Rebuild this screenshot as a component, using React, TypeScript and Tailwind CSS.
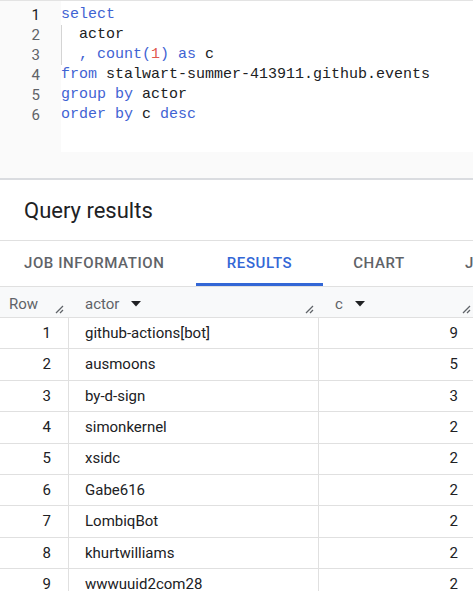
import React from 'react';

const KW = 'text-[#3f63d3]';

type Row = { actor: string; c: number };

const rows: Row[] = [
  { actor: 'github-actions[bot]', c: 9 },
  { actor: 'ausmoons', c: 5 },
  { actor: 'by-d-sign', c: 3 },
  { actor: 'simonkernel', c: 2 },
  { actor: 'xsidc', c: 2 },
  { actor: 'Gabe616', c: 2 },
  { actor: 'LombiqBot', c: 2 },
  { actor: 'khurtwilliams', c: 2 },
  { actor: 'wwwuuid2com28', c: 2 },
];

const SortArrow = () => (
  <svg width="10" height="6" viewBox="0 0 10 6" className="ml-[12px]">
    <path d="M0 0 L10 0 L5 5.5 Z" fill="#202124" />
  </svg>
);

const Resize = () => (
  <svg width="9" height="9" viewBox="0 0 9 9" className="self-end mb-[3px]">
    <path d="M1 8 L8 1 M5 8 L8 5" stroke="#5f6368" strokeWidth="1.3" />
  </svg>
);

const CodeLine = ({ children, guide }: { children: React.ReactNode; guide?: boolean }) => (
  <div className={`h-[20px] whitespace-pre ${guide ? 'shadow-[inset_1px_0_0_#d4d4d4]' : ''}`}>{children}</div>
);

export default function App() {
  return (
    <div className="w-[473px] h-[591px] overflow-hidden bg-white font-['Roboto',sans-serif] text-[#202124]">
      {/* editor */}
      <div className="h-[180px] bg-[#fafafa] border-t border-[#e3e3e3] border-b-2 border-b-[#dadce0] flex flex-col">
        <div className="flex h-[151px]">
          <div className="w-[61px] pt-[4px] pr-[21px] flex flex-col items-end text-[15px] leading-[20px] text-[#5f6368]">
            {[1, 2, 3, 4, 5, 6].map((n) => (
              <div key={n} className={n === 1 ? 'text-[#202124]' : ''}>
                {n}
              </div>
            ))}
          </div>
          <div className="flex-1 bg-white pt-[4px] font-['Liberation_Mono',monospace] text-[15px] leading-[20px] text-[#202124]">
            <CodeLine>
              <span className={KW}>select</span>
            </CodeLine>
            <CodeLine guide>{'  actor'}</CodeLine>
            <CodeLine guide>
              {'  '}
              <span className={KW}>, count(</span>
              <span className="text-[#e2584e]">1</span>
              <span className={KW}>) as</span> c
            </CodeLine>
            <CodeLine>
              <span className={KW}>from</span> stalwart-summer-413911.github.events
            </CodeLine>
            <CodeLine>
              <span className={KW}>group by</span> actor
            </CodeLine>
            <CodeLine>
              <span className={KW}>order by</span> c <span className={KW}>desc</span>
            </CodeLine>
          </div>
        </div>
      </div>

      {/* results header */}
      <div className="h-[61px] flex items-center pl-[24px] border-b border-[#e0e0e0]">
        <span className="text-[22px] text-[#202124]">Query results</span>
      </div>

      {/* tabs */}
      <div className="h-[45px] flex text-[15px] font-medium tracking-[0.6px] text-[#5f6368]">
        <div className="w-[196px] shrink-0 pl-[24px] flex items-center">JOB INFORMATION</div>
        <div className="w-[127px] shrink-0 flex items-center justify-center text-[#3367d6] border-b-[3px] border-[#3367d6] pt-[3px]">
          RESULTS
        </div>
        <div className="w-[112px] shrink-0 flex items-center justify-center">CHART</div>
        <div className="shrink-0 pl-[30px] flex items-center">J</div>
      </div>

      {/* table */}
      <div className="border-t border-[#e0e0e0]">
        <div className="flex h-[31px] bg-[#f8f9fa] border-b border-[#e0e0e0] text-[15px] text-[#5f6368]">
          <div className="w-[69px] shrink-0 flex items-start pt-[6px] pl-[9px] pr-[5px] justify-between">
            <span>Row</span>
            <Resize />
          </div>
          <div className="w-[250px] shrink-0 flex items-start pt-[6px] pl-[16px] pr-[5px]">
            <span className="flex items-center">
              actor
              <SortArrow />
            </span>
            <div className="flex-1" />
            <Resize />
          </div>
          <div className="flex-1 flex items-start pt-[6px] pl-[16px] pr-[2px]">
            <span className="flex items-center">
              c
              <SortArrow />
            </span>
            <div className="flex-1" />
            <Resize />
          </div>
        </div>
        {rows.map((r, i) => (
          <div key={i} className="flex h-[31.375px] border-b border-[#e0e0e0] text-[15px] text-[#202124]">
            <div className="w-[69px] shrink-0 flex items-center justify-end pr-[17px] border-r border-[#e0e0e0]">
              {i + 1}
            </div>
            <div className="w-[250px] shrink-0 flex items-center pl-[16px] border-r border-[#e0e0e0]">{r.actor}</div>
            <div className="flex-1 flex items-center justify-end pr-[15px]">{r.c}</div>
          </div>
        ))}
      </div>
    </div>
  );
}
